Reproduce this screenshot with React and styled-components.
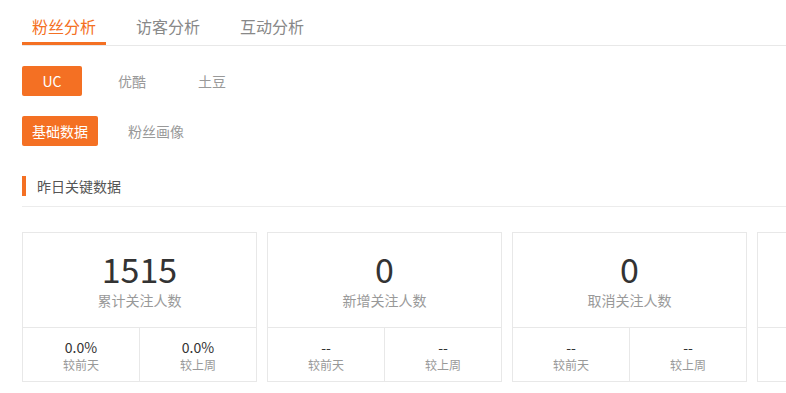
import React, { useState } from 'react';
import styled, { createGlobalStyle } from 'styled-components';

const ORANGE = '#f47023';

const GlobalStyle = createGlobalStyle`
  body {
    margin: 0;
    background: #fff;
    font-family: "Noto Sans CJK SC", "Noto Sans", sans-serif;
  }
`;

const tabs = ['粉丝分析', '访客分析', '互动分析'];
const platforms = ['UC', '优酷', '土豆'];
const views = ['基础数据', '粉丝画像'];

const cards = [
  { value: '1515', label: '累计关注人数', day: '0.0%', week: '0.0%' },
  { value: '0', label: '新增关注人数', day: '--', week: '--' },
  { value: '0', label: '取消关注人数', day: '--', week: '--' },
  { value: '0', label: '净增关注人数', day: '--', week: '--' },
];

function App() {
  const [tab, setTab] = useState(0);
  const [platform, setPlatform] = useState(0);
  const [view, setView] = useState(0);

  return (
    <Page>
      <GlobalStyle />
      <TabBar>
        {tabs.map((t, i) => (
          <Tab key={t} active={i === tab} onClick={() => setTab(i)}>{t}</Tab>
        ))}
      </TabBar>

      <PillRow>
        {platforms.map((p, i) => (
          <Pill key={p} width={60} active={i === platform} onClick={() => setPlatform(i)}>{p}</Pill>
        ))}
      </PillRow>

      <PillRow>
        {views.map((v, i) => (
          <Pill key={v} width={76} active={i === view} onClick={() => setView(i)}>{v}</Pill>
        ))}
      </PillRow>

      <SectionTitle>昨日关键数据</SectionTitle>

      <CardRow>
        {cards.map((c) => (
          <Card key={c.label}>
            <CardTop>
              <BigNumber>{c.value}</BigNumber>
              <CardLabel>{c.label}</CardLabel>
            </CardTop>
            <CardBottom>
              <Compare>
                <CompareValue>{c.day}</CompareValue>
                <CompareLabel>较前天</CompareLabel>
              </Compare>
              <Compare>
                <CompareValue>{c.week}</CompareValue>
                <CompareLabel>较上周</CompareLabel>
              </Compare>
            </CardBottom>
          </Card>
        ))}
      </CardRow>
    </Page>
  );
}

export default App;

const Page = styled.div`
  width: 786px;
  height: 393px;
  overflow: hidden;
  padding-left: 22px;
  box-sizing: border-box;
`;

const TabBar = styled.div`
  display: flex;
  gap: 20px;
  height: 46px;
  border-bottom: 1px solid #e8e8e8;
  box-sizing: border-box;
  padding-top: 12px;
`;

const Tab = styled.div`
  padding: 0 10px;
  font-size: 16px;
  line-height: 28px;
  height: 33px;
  box-sizing: border-box;
  color: ${(p) => (p.active ? ORANGE : '#888')};
  border-bottom: 3px solid ${(p) => (p.active ? ORANGE : 'transparent')};
  cursor: pointer;
`;

const PillRow = styled.div`
  display: flex;
  gap: 20px;
  margin-top: 20px;
`;

const Pill = styled.div`
  width: ${(p) => p.width}px;
  height: 30px;
  line-height: 30px;
  text-align: center;
  font-size: 14px;
  border-radius: 2px;
  color: ${(p) => (p.active ? '#fff' : '#999')};
  background: ${(p) => (p.active ? ORANGE : 'transparent')};
  cursor: pointer;
`;

const SectionTitle = styled.div`
  margin-top: 30px;
  height: 20px;
  display: flex;
  align-items: center;
  font-size: 14px;
  color: #555;
  border-bottom: 1px solid #ececec;
  padding-bottom: 10px;

  &::before {
    content: '';
    width: 4px;
    height: 20px;
    background: ${ORANGE};
    margin-right: 11px;
  }
`;

const CardRow = styled.div`
  display: flex;
  gap: 10px;
  margin-top: 25px;
`;

const Card = styled.div`
  flex: 0 0 235px;
  height: 150px;
  box-sizing: border-box;
  border: 1px solid #e8e8e8;
  display: flex;
  flex-direction: column;
`;

const CardTop = styled.div`
  height: 95px;
  border-bottom: 1px solid #e8e8e8;
  display: flex;
  flex-direction: column;
  align-items: center;
  padding-top: 15px;
  box-sizing: border-box;
`;

const BigNumber = styled.div`
  font-size: 34px;
  line-height: 42px;
  color: #333;
`;

const CardLabel = styled.div`
  font-size: 14px;
  line-height: 20px;
  color: #999;
`;

const CardBottom = styled.div`
  flex: 1;
  display: flex;
`;

const Compare = styled.div`
  flex: 1;
  display: flex;
  flex-direction: column;
  align-items: center;
  padding-top: 10px;
  & + & {
    border-left: 1px solid #e8e8e8;
  }
`;

const CompareValue = styled.div`
  font-size: 14px;
  line-height: 18px;
  color: #333;
`;

const CompareLabel = styled.div`
  font-size: 12px;
  line-height: 17px;
  color: #999;
`;
